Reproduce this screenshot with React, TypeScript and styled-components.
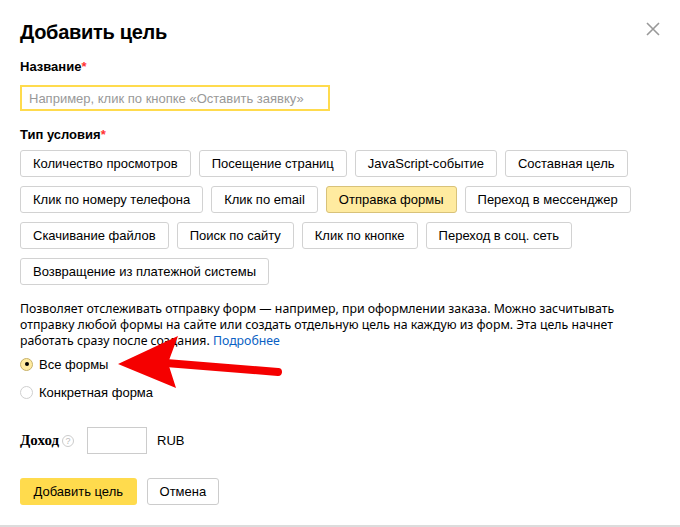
import styled, { createGlobalStyle } from "styled-components";

const GlobalStyle = createGlobalStyle`
  * { box-sizing: border-box; }
  body {
    margin: 0;
    background: #fff;
    font-family: "Liberation Sans", Arial, sans-serif;
    color: #000;
  }
`;

const rows = [
  ["Количество просмотров", "Посещение страниц", "JavaScript-событие", "Составная цель"],
  ["Клик по номеру телефона", "Клик по email", "Отправка формы", "Переход в мессенджер"],
  ["Скачивание файлов", "Поиск по сайту", "Клик по кнопке", "Переход в соц. сеть"],
  ["Возвращение из платежной системы"],
];

export default function App() {
  return (
    <>
      <GlobalStyle />
      <Dialog>
        <Header>
          <Title>Добавить цель</Title>
          <Close aria-label="close">
            <svg width="14" height="14" viewBox="0 0 14 14">
              <path d="M1 1L13 13M13 1L1 13" stroke="#999" strokeWidth="1.6" />
            </svg>
          </Close>
        </Header>

        <Label>
          Название<Star>*</Star>
        </Label>
        <NameInput placeholder="Например, клик по кнопке «Оставить заявку»" />

        <Label $top={16}>
          Тип условия<Star>*</Star>
        </Label>
        <Types>
          {rows.map((row, i) => (
            <TypeRow key={i}>
              {row.map((t) => (
                <TypeButton key={t} $active={t === "Отправка формы"}>
                  {t}
                </TypeButton>
              ))}
            </TypeRow>
          ))}
        </Types>

        <Description>
          Позволяет отслеживать отправку форм — например, при оформлении заказа. Можно засчитывать
          <br />
          отправку любой формы на сайте или создать отдельную цель на каждую из форм. Эта цель начнет
          <br />
          работать сразу после создания. <MoreLink href="#">Подробнее</MoreLink>
        </Description>

        <Radios>
          <RadioRow>
            <Radio $checked />
            Все формы
          </RadioRow>
          <RadioRow>
            <Radio />
            Конкретная форма
          </RadioRow>
        </Radios>

        <IncomeRow>
          <IncomeLabel>Доход</IncomeLabel>
          <Hint>?</Hint>
          <IncomeInput />
          <Currency>RUB</Currency>
        </IncomeRow>

        <Actions>
          <PrimaryButton>Добавить цель</PrimaryButton>
          <CancelButton>Отмена</CancelButton>
        </Actions>

        <Arrow width="180" height="70" viewBox="0 0 180 70">
          <path d="M2 39 L62 11 L52 38 L60 63 Z" fill="#f50000" />
          <path d="M50 38 L162 47" stroke="#f50000" strokeWidth="8" strokeLinecap="round" />
        </Arrow>
      </Dialog>
    </>
  );
}

const Dialog = styled.div`
  position: relative;
  height: 527px;
  padding: 20px 20px 0 20px;
  border-bottom: 2px solid #dcdcdc;
`;

const Header = styled.div`
  display: flex;
  justify-content: space-between;
  align-items: flex-start;
  height: 24px;
`;

const Title = styled.h1`
  margin: 0;
  font-size: 20px;
  line-height: 24px;
  font-weight: 700;
  letter-spacing: -0.3px;
`;

const Close = styled.button`
  border: none;
  background: none;
  padding: 0;
  margin: 2px 0 0 0;
  width: 14px;
  height: 14px;
  cursor: pointer;
`;

const Label = styled.div<{ $top?: number }>`
  margin-top: ${(p) => p.$top ?? 15}px;
  font-size: 13px;
  line-height: 16px;
  font-weight: 700;
`;

const Star = styled.span`
  color: #f33;
`;

const NameInput = styled.input`
  display: block;
  margin-top: 10px;
  width: 310px;
  height: 26px;
  border: 2px solid #ffdb4d;
  padding: 0 7px;
  font-family: "Liberation Sans", Arial, sans-serif;
  font-size: 13px;
  outline: none;
  &::placeholder {
    color: #999;
  }
`;

const Types = styled.div`
  margin-top: 7px;
  display: flex;
  flex-direction: column;
  gap: 9px;
`;

const TypeRow = styled.div`
  display: flex;
  gap: 8px;
`;

const TypeButton = styled.button<{ $active?: boolean }>`
  height: 27px;
  padding: 0 12px;
  border-radius: 3px;
  border: 1px solid ${(p) => (p.$active ? "#d8c27a" : "#d2d2d2")};
  background: ${(p) => (p.$active ? "#ffeba0" : "#fff")};
  font-family: "Liberation Sans", Arial, sans-serif;
  font-size: 13px;
  color: #000;
  cursor: pointer;
`;

const Description = styled.p`
  margin: 16px 0 0 0;
  font-family: "Noto Sans", "Open Sans", sans-serif;
  font-size: 12.3px;
  line-height: 16px;
  color: #000;
  white-space: nowrap;
`;

const MoreLink = styled.a`
  color: #0a5fc4;
  text-decoration: none;
`;

const Radios = styled.div`
  margin-top: 1px;
  display: flex;
  flex-direction: column;
`;

const RadioRow = styled.label`
  display: flex;
  align-items: center;
  gap: 6px;
  height: 28px;
  font-size: 13px;
`;

const Radio = styled.span<{ $checked?: boolean }>`
  position: relative;
  width: 13px;
  height: 13px;
  border-radius: 50%;
  border: 1px solid ${(p) => (p.$checked ? "#c7b16a" : "#cfcfcf")};
  background: ${(p) => (p.$checked ? "#ffeba0" : "#fff")};
  &::after {
    content: "";
    display: ${(p) => (p.$checked ? "block" : "none")};
    position: absolute;
    left: 3.5px;
    top: 3.5px;
    width: 4px;
    height: 4px;
    border-radius: 50%;
    background: #000;
  }
`;

const IncomeRow = styled.div`
  margin-top: 21px;
  display: flex;
  align-items: center;
  height: 27px;
`;

const IncomeLabel = styled.span`
  font-family: "Liberation Serif", "Times New Roman", serif;
  font-weight: 700;
  font-size: 15px;
`;

const Hint = styled.span`
  margin-left: 3px;
  width: 12px;
  height: 12px;
  border-radius: 50%;
  border: 1px solid #ccc;
  color: #bbb;
  font-size: 9px;
  line-height: 10px;
  text-align: center;
`;

const IncomeInput = styled.input`
  margin-left: 13px;
  width: 60px;
  height: 27px;
  border: 1px solid #ccc;
  outline: none;
`;

const Currency = styled.span`
  margin-left: 10px;
  font-size: 13px;
`;

const Actions = styled.div`
  margin-top: 24px;
  display: flex;
  gap: 10px;
`;

const PrimaryButton = styled.button`
  height: 27px;
  padding: 0 13.5px;
  border: none;
  border-radius: 3px;
  background: #ffdb4d;
  font-family: "Liberation Sans", Arial, sans-serif;
  font-size: 13px;
  color: #000;
  cursor: pointer;
`;

const CancelButton = styled.button`
  height: 27px;
  padding: 0 12px;
  border: 1px solid #ccc;
  border-radius: 3px;
  background: #fff;
  font-family: "Liberation Sans", Arial, sans-serif;
  font-size: 13px;
  color: #000;
  cursor: pointer;
`;

const Arrow = styled.svg`
  position: absolute;
  left: 116px;
  top: 325px;
  pointer-events: none;
`;
